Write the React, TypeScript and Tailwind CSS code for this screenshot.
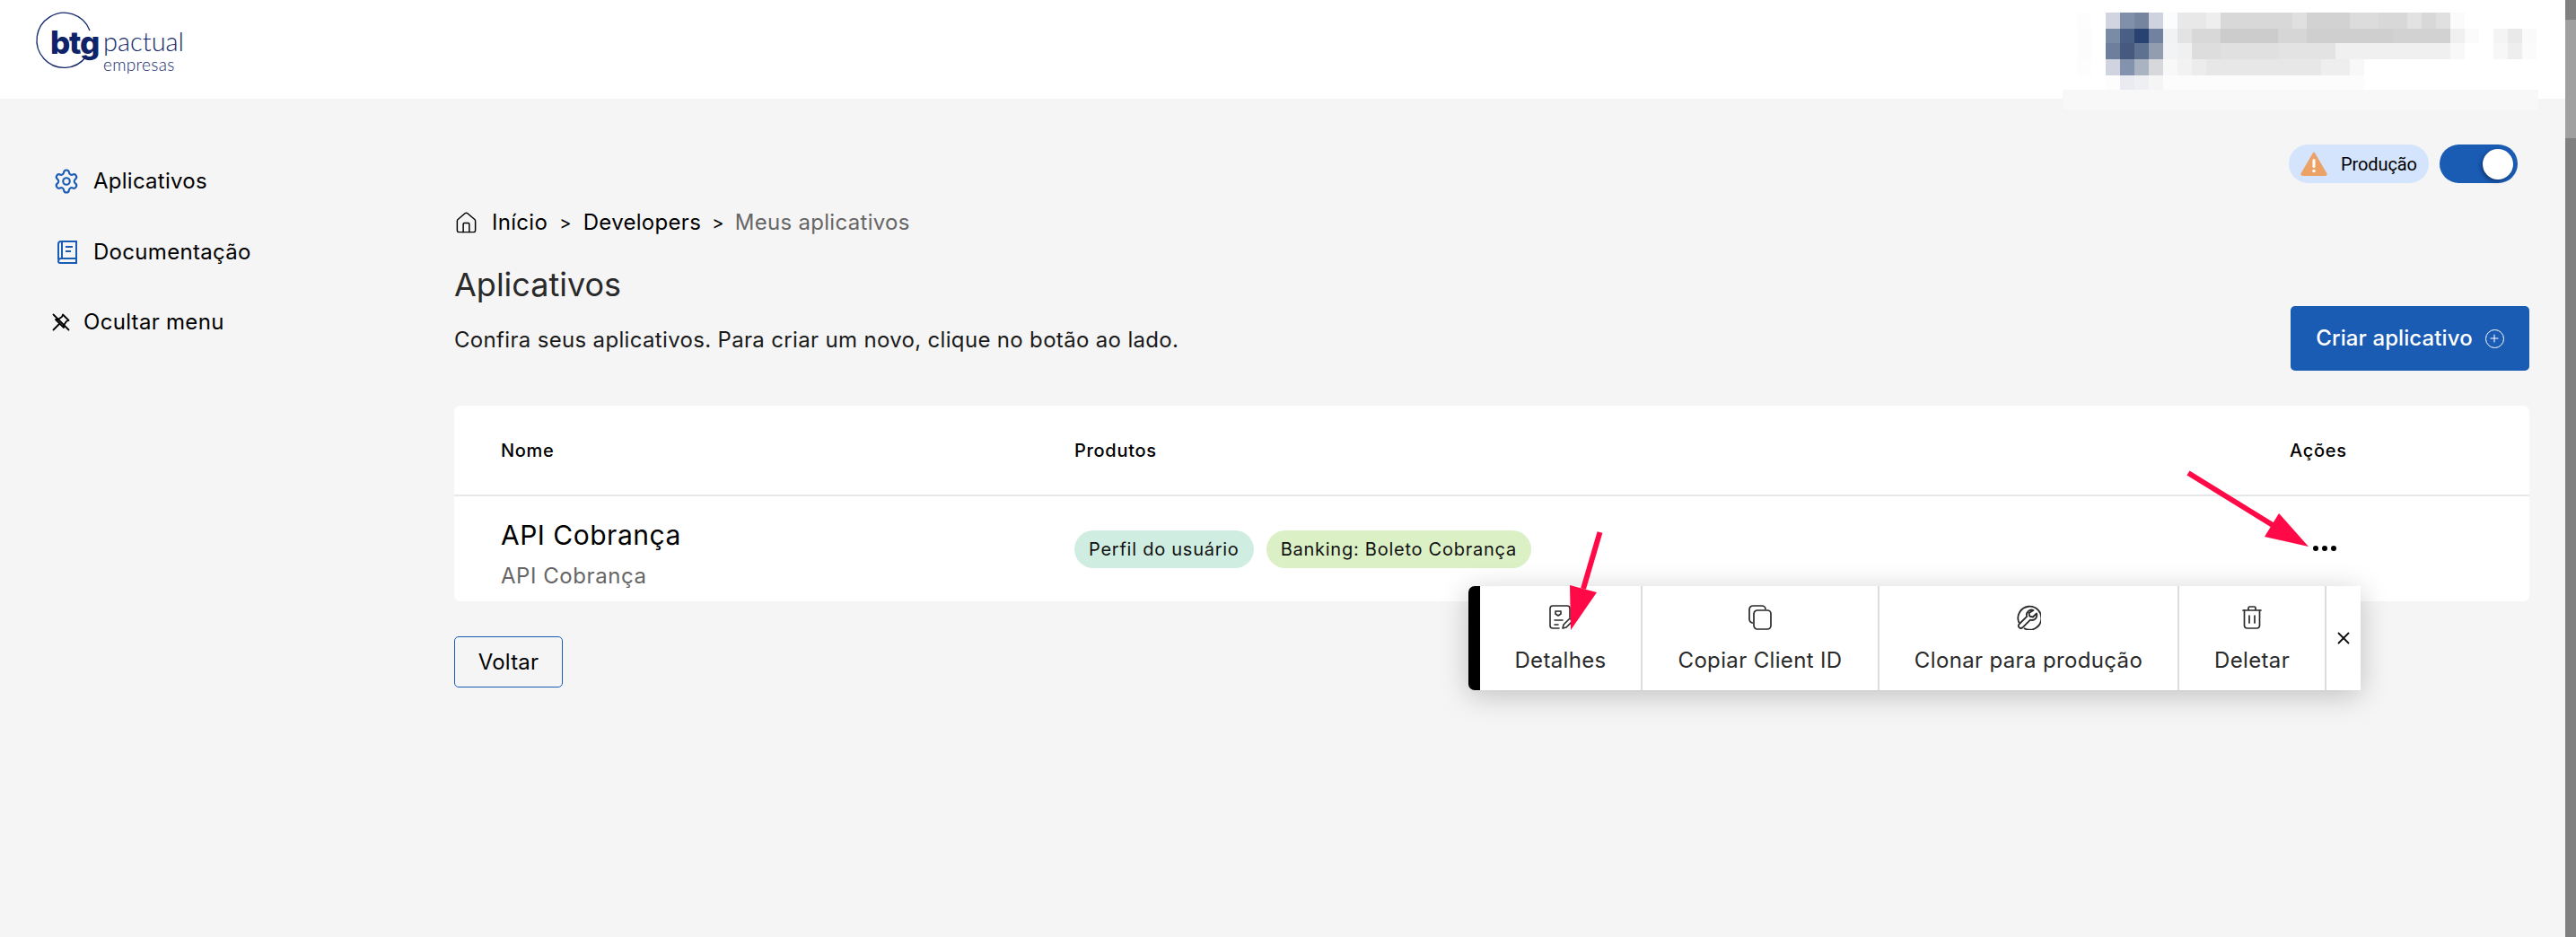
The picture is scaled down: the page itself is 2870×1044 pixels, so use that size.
import { Settings, House, Plus, X } from 'lucide-react';

const font = "font-['Inter','Liberation_Sans',sans-serif]";

// pixelated account area: [column, colour] per row
const blurRows: { y: number; h: number; cells: [number, number, string][] }[] = [
  { y: 14, h: 18, cells: [[1, 1, '#fdfdfd'], [3, 1, '#d0d5e0'], [4, 1, '#8090aa'], [5, 1, '#7585a0'], [6, 1, '#ced3df'], [7, 1, '#fbfcfd'], [8, 2, '#e8e8e8'], [10, 1, '#eeeeee'], [11, 5, '#d8d8d8'], [16, 1, '#e0e0e0'], [17, 3, '#d2d2d2'], [20, 2, '#dcdcdc'], [22, 2, '#d8d8d8'], [24, 1, '#e2e2e2'], [25, 1, '#d8d8d8'], [26, 1, '#e0e0e0'], [27, 1, '#fbfbfb']] },
  { y: 32, h: 16, cells: [[1, 1, '#fcfcfc'], [3, 1, '#7a8ba6'], [4, 1, '#4a5f85'], [5, 1, '#284272'], [6, 1, '#70829f'], [7, 1, '#f1f2f4'], [8, 1, '#e3e3e3'], [9, 2, '#d8d8d8'], [11, 4, '#cccccc'], [15, 2, '#d6d6d6'], [17, 6, '#cfcfcf'], [23, 4, '#d2d2d2'], [27, 1, '#f0f0f0'], [28, 1, '#fbfbfb'], [30, 1, '#f4f4f4'], [31, 1, '#e9e9e9'], [32, 1, '#fafafa']] },
  { y: 48, h: 18, cells: [[1, 1, '#fcfcfc'], [3, 1, '#6d7f9c'], [4, 1, '#46597f'], [5, 1, '#5f7190'], [6, 1, '#939db0'], [7, 1, '#f2f3f5'], [8, 1, '#f0f0f0'], [9, 2, '#dddddd'], [11, 4, '#e0e0e0'], [15, 4, '#e3e3e3'], [19, 8, '#f0f0f0'], [27, 1, '#f8f8f8'], [30, 1, '#f7f7f7'], [31, 1, '#eeeeee'], [32, 1, '#fbfbfb']] },
  { y: 66, h: 18, cells: [[1, 1, '#fdfdfd'], [3, 1, '#cfd4e0'], [4, 1, '#8393ad'], [5, 1, '#aab3c2'], [6, 1, '#d6d8dc'], [7, 1, '#f8f8f8'], [8, 1, '#f2f2f2'], [9, 1, '#ececec'], [10, 8, '#e7e7e7'], [18, 2, '#eeeeee'], [20, 1, '#f8f8f8']] },
  { y: 84, h: 16, cells: [[3, 1, '#fdfdfd'], [4, 1, '#e9ebf0'], [5, 1, '#eeeff2'], [6, 1, '#f5f5f6'], [7, 14, '#fcfcfc']] },
];

function PixelBlur() {
  return (
    <svg className="absolute left-[2298px] top-0" width="530" height="122" viewBox="0 0 530 122">
      <rect x="0" y="100" width="530" height="22" fill="#f8f8f8" />
      {blurRows.map((row) =>
        row.cells.map(([col, span, color]) => (
          <rect key={`${row.y}-${col}`} x={col * 16} y={row.y} width={span * 16} height={row.h} fill={color} />
        )),
      )}
    </svg>
  );
}

function Logo() {
  return (
    <div className="relative w-[180px] h-[75px]">
      <svg className="absolute left-0 top-0" width="80" height="75" viewBox="0 0 80 75" fill="none">
        <path d="M70 24 A30.500 30.500 0 1 0 66 53" stroke="#14296b" strokeWidth="1.300" />
      </svg>
      <span className="absolute left-[26px] top-[17px] text-[35px] leading-[40px] font-extrabold tracking-[-1.2px] text-[#0f2468] font-['Inter',sans-serif]">btg</span>
      <span className="absolute left-[85px] top-[18px] text-[29px] leading-[36px] font-light text-[#14296b] font-['Lato',sans-serif]">pactual</span>
      <span className="absolute left-[85px] top-[50px] text-[19px] leading-[24px] font-light tracking-[0.3px] text-[#14296b] font-['Lato',sans-serif]">empresas</span>
    </div>
  );
}

function BookIcon() {
  return (
    <svg width="24" height="26" viewBox="0 0 24 26" fill="none" stroke="#1a5bb4" strokeWidth="2">
      <path d="M2 21V4a3 3 0 0 1 3-3h17v19H5a3 3 0 0 0-3 3 2 2 0 0 0 2 2h18v-5" />
      <path d="M6 1v19M10 7h8M10 12h6" />
    </svg>
  );
}

function PinHiddenIcon() {
  return (
    <svg width="20" height="20" viewBox="0 0 20 20" fill="none" stroke="#000" strokeWidth="1.800" strokeLinejoin="round" strokeLinecap="round">
      <path d="M12 1.500 18.500 8 16 9 13 13.500 13 16 4 7 6.500 7 11 4z" />
      <path d="M8 12 1.500 18.500" />
      <path d="M1.500 1.500 18.500 18.500" />
    </svg>
  );
}

function DetailsIcon() {
  return (
    <svg width="26" height="28" viewBox="0 0 26 28" fill="none" stroke="#2a2a2a" strokeWidth="1.600" strokeLinecap="round" strokeLinejoin="round">
      <path d="M11 26H4a3 3 0 0 1-3-3V4a3 3 0 0 1 3-3h16a3 3 0 0 1 3 3v10" />
      <path d="M7 7h6v3l-3 2-3-2zM6 17h9M6 22h4" />
      <path d="M15 26l1-4 7-7 3 3-7 7z" />
    </svg>
  );
}

function CopyIcon() {
  return (
    <svg width="26" height="28" viewBox="0 0 26 28" fill="none" stroke="#2a2a2a" strokeWidth="1.700" strokeLinejoin="round">
      <path d="M5 20a4 4 0 0 1-4-4V5a4 4 0 0 1 4-4h10a4 4 0 0 1 4 4" />
      <rect x="6" y="6" width="19" height="21" rx="4" />
    </svg>
  );
}

function CloneIcon() {
  return (
    <svg width="28" height="28" viewBox="0 0 28 28" fill="none" stroke="#2a2a2a" strokeWidth="1.800" strokeLinejoin="round">
      <path d="M3.500 20A13 13 0 1 1 9 26" />
      <path d="M19.500 6a5.500 5.500 0 0 0-7.300 6.800L3.500 21.500a2.700 2.700 0 0 0 3.800 3.800l8.700-8.700a5.500 5.500 0 0 0 7-7.100L19 13.500l-3.800-.8-.6-3.700z" />
    </svg>
  );
}

function TrashIcon() {
  return (
    <svg width="22" height="26" viewBox="0 0 22 26" fill="none" stroke="#2a2a2a" strokeWidth="1.700" strokeLinecap="round" strokeLinejoin="round">
      <path d="M1 5h20M7 5V2.500A1.500 1.500 0 0 1 8.500 1h5A1.500 1.500 0 0 1 15 2.500V5" />
      <path d="M2.500 5v17a3 3 0 0 0 3 3h11a3 3 0 0 0 3-3V5" />
      <path d="M8 11v8M14 11v8" />
    </svg>
  );
}

const actions = [
  { label: 'Detalhes', icon: <DetailsIcon />, width: 'w-[181px]' },
  { label: 'Copiar Client ID', icon: <CopyIcon />, width: 'w-[264px]' },
  { label: 'Clonar para produção', icon: <CloneIcon />, width: 'w-[334px]' },
  { label: 'Deletar', icon: <TrashIcon />, width: 'w-[164px]' },
];

export default function App() {
  return (
    <div className={`relative flex h-screen overflow-hidden bg-[#f5f5f5] text-black ${font}`}>
      <div className="flex-1 flex flex-col min-w-0">
        <header className="h-[110px] shrink-0 bg-white pl-[30px] pt-[10px]">
          <Logo />
        </header>

        <div className="flex flex-1">
          <aside className="w-[506px] shrink-0 pt-[74px]">
            <a className="flex items-center h-[36px] pl-[59px] gap-[15px] text-[24px] tracking-[0.25px]">
              <Settings size={30} color="#1a5bb4" strokeWidth={1.700} />
              Aplicativos
            </a>
            <a className="flex items-center h-[36px] mt-[43px] pl-[63px] gap-[17px] text-[24px] tracking-[0.3px]">
              <BookIcon />
              Documentação
            </a>
            <a className="flex items-center h-[36px] mt-[42px] pl-[58px] gap-[15px] text-[24px] tracking-[0.3px]">
              <PinHiddenIcon />
              Ocultar menu
            </a>
          </aside>

          <main className="flex-1 pr-[40px] pt-[51px]">
            <div className="flex justify-end items-center gap-[12px] pr-[13px]">
              <div className="flex items-center h-[43px] w-[156px] pl-[13px] gap-[15px] rounded-full bg-[#d3e4fc] text-[20px] tracking-[-0.1px] font-['Roboto',sans-serif]">
                <svg width="30" height="27" viewBox="0 0 30 27">
                  <path d="M15 1.500 28.500 24.500a1 1 0 0 1-1 1.500H2.500a1 1 0 0 1-1-1.500z" fill="#eca267" stroke="#eca267" strokeWidth="2" strokeLinejoin="round" />
                  <rect x="13.500" y="8" width="3" height="10" rx="1.500" fill="#fff" />
                  <circle cx="15" cy="21.500" r="1.800" fill="#fff" />
                </svg>
                Produção
              </div>
              <div className="flex items-center justify-end w-[87px] h-[43px] rounded-full bg-[#1a5bb4] pr-[5px]">
                <span className="w-[34px] h-[34px] rounded-full bg-white shadow-[-2px_2px_4px_rgba(0,0,0,0.35)]" />
              </div>
            </div>

            <nav className="flex items-center h-[30px] mt-[29px] text-[24px] tracking-[0.3px]">
              <House size={27} strokeWidth={1.300} />
              <span className="ml-[15px]">Início</span>
              <span className="mx-[13px] text-[20px]">&gt;</span>
              <span>Developers</span>
              <span className="mx-[12px] text-[20px]">&gt;</span>
              <span className="text-[#666666]">Meus aplicativos</span>
            </nav>

            <div className="flex items-start justify-between mt-[32px]">
              <div>
                <h1 className="text-[36px] leading-[44px] text-[#2a2a2a] font-normal tracking-[0px]">Aplicativos</h1>
                <p className="mt-[25px] text-[24px] leading-[30px] text-[#1a1a1a] tracking-[0.33px]">
                  Confira seus aplicativos. Para criar um novo, clique no botão ao lado.
                </p>
              </div>
              <button className="mt-[46px] flex items-center justify-center gap-[14px] w-[266px] h-[72px] rounded-[5px] bg-[#1a5bb4] text-white text-[24px] font-medium tracking-[0.1px]">
                Criar aplicativo
                <span className="flex items-center justify-center w-[21px] h-[21px] rounded-full border-[1.5px] border-white">
                  <Plus size={14} strokeWidth={1.800} />
                </span>
              </button>
            </div>

            <section className="mt-[39px] w-[2312px] bg-white rounded-[7px]">
              <div className="flex items-center h-[101px] pt-[1px] border-b-2 border-[#e6e6e6] text-[20px] font-medium tracking-[0.7px]">
                <span className="pl-[52px] w-[691px]">Nome</span>
                <span className="flex-1">Produtos</span>
                <span className="w-[267px]">Ações</span>
              </div>
              <div className="flex h-[117px]">
                <div className="pl-[52px] w-[691px] pt-[24px]">
                  <div className="text-[30px] leading-[38px] tracking-[0.5px]">API Cobrança</div>
                  <div className="mt-[12px] text-[24px] leading-[30px] text-[#666666] tracking-[0.55px]">API Cobrança</div>
                </div>
                <div className="flex-1 flex gap-[14px] pt-[38px] text-[20px] text-[#111111] tracking-[0.75px]">
                  <span className="flex items-center h-[42px] px-[16px] rounded-full bg-[#d0ede2]">Perfil do usuário</span>
                  <span className="flex items-center h-[42px] px-[16px] rounded-full bg-[#dcf0c6]">Banking: Boleto Cobrança</span>
                </div>
                <div className="w-[267px] flex gap-[4px] pt-[55px] pl-[26px]">
                  <span className="w-[6px] h-[6px] rounded-full bg-black" />
                  <span className="w-[6px] h-[6px] rounded-full bg-black" />
                  <span className="w-[6px] h-[6px] rounded-full bg-black" />
                </div>
              </div>
            </section>

            <button className="mt-[39px] w-[121px] h-[57px] rounded-[5px] border border-[#1a5bb4] text-[24px] tracking-[0.2px]">Voltar</button>
          </main>
        </div>
      </div>

      <div className="w-[12px] shrink-0 bg-[#808080] pt-[22px]">
        <div className="h-[132px] bg-[#a0a0a0]" />
      </div>

      <PixelBlur />

      {/* action menu opened from the row's dots */}
      <div className="absolute left-[1636px] top-[653px] flex h-[116px] rounded-l-[7px] bg-white border-l-[13px] border-black shadow-[0_6px_32px_rgba(0,0,0,0.22)] text-[24px] text-[#2a2a2a]">
        {actions.map((a) => (
          <div key={a.label} className={`flex flex-col items-center pt-[21px] border-r-2 border-[#dcdcdc] ${a.width}`}>
            <span className="flex items-center justify-center h-[28px]">{a.icon}</span>
            <span className="mt-[19px] leading-[30px] whitespace-nowrap tracking-[0.35px]">{a.label}</span>
          </div>
        ))}
        <div className="flex justify-center w-[38px] pt-[47px]">
          <X size={22} strokeWidth={2} color="#111111" />
        </div>
      </div>

      {/* annotation arrows */}
      <svg className="absolute left-0 top-0 pointer-events-none" width="2870" height="1044">
        <path d="M2438 527 2532 585" stroke="#ff0a47" strokeWidth="6" />
        <path d="M2572 609 2539 572 2523 598z" fill="#ff0a47" />
        <path d="M1782.500 593 1764 656" stroke="#ff0a47" strokeWidth="6" />
        <path d="M1750 702 1749 652 1779 660z" fill="#ff0a47" />
      </svg>
    </div>
  );
}
